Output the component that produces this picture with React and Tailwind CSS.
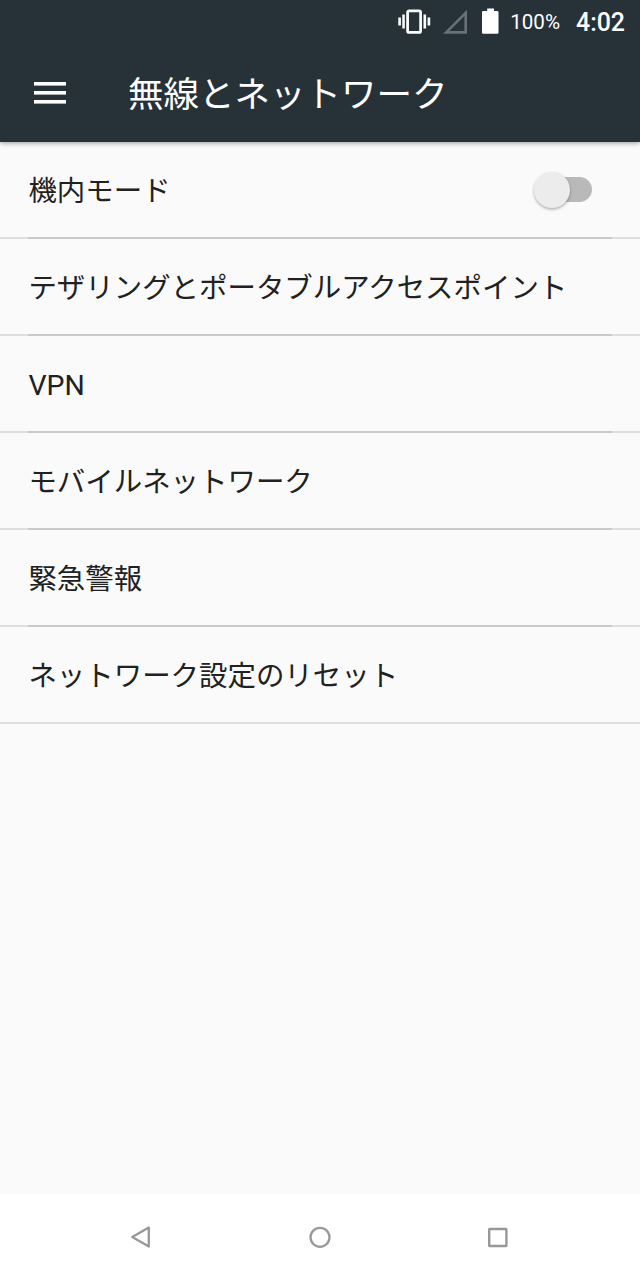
const rows = [
  { label: '機内モード', toggle: true },
  { label: 'テザリングとポータブルアクセスポイント' },
  { label: 'VPN' },
  { label: 'モバイルネットワーク' },
  { label: '緊急警報' },
  { label: 'ネットワーク設定のリセット' },
];

function StatusBar() {
  return (
    <div className="flex h-11 items-center justify-end pr-[15px] text-white">
      <svg className="mr-3 h-7 w-[33px]" viewBox="0 0 33 28" fill="#fff">
        <rect x="9.6" y="2.8" width="13" height="21.6" rx="1.5" fill="none" stroke="#fff" strokeWidth="2.7" />
        <rect x="0.3" y="9.5" width="2.6" height="8" />
        <rect x="4.3" y="6.5" width="2.5" height="14" />
        <rect x="25.5" y="6.5" width="2.6" height="14" />
        <rect x="29.6" y="9.5" width="2.6" height="8" />
      </svg>
      <svg className="mr-3.5 h-7 w-[25px]" viewBox="0 0 25 28">
        <path d="M3.2 24.4H22.7V4.8Z" fill="none" stroke="#697176" strokeWidth="2.6" />
      </svg>
      <svg className="mr-[10px] h-7 w-[18px]" viewBox="0 0 18 28">
        <path d="M5.2 0.4h6.8v2.5h3.2q1.3 0 1.3 1.3v20.3q0 1.3-1.3 1.3H1.3Q0 25.8 0 24.5V4.2q0-1.3 1.3-1.3h3.9z" fill="#fff" />
      </svg>
      <span className="mr-[16px] text-[20.6px] leading-none">100%</span>
      <span className="pt-0.5 text-[24.9px] font-medium leading-none">4:02</span>
    </div>
  );
}

function Switch() {
  return (
    <div className="flex h-[38px] w-[60px] items-center">
      <div className="relative ml-[19px] h-[25px] w-10 rounded-full bg-[#b9b9b9]">
        <div className="absolute -left-[18px] -top-[5px] size-[36px] rounded-full bg-[#ececec] shadow-[0_1.5px_3px_rgba(0,0,0,0.3)]" />
      </div>
    </div>
  );
}

export default function App() {
  return (
    <div
      lang="ja"
      className="flex h-[1280px] w-[640px] flex-col overflow-hidden bg-[#fafafa] font-[Roboto,'Noto_Sans_CJK_JP',sans-serif]"
    >
      <header className="z-10 h-[142px] shrink-0 bg-[#263238] shadow-[0_1px_5px_rgba(0,0,0,0.4)]">
        <StatusBar />
        <div className="flex h-[98px] items-center pl-[34px]">
          <svg className="h-[22px] w-8" viewBox="0 0 32 22" fill="#fff">
            <rect y="0" width="32" height="3.6" />
            <rect y="9" width="32" height="3.6" />
            <rect y="18" width="32" height="3.6" />
          </svg>
          <h1 className="ml-[62px] pt-1.5 text-[35.5px] leading-none text-white">無線とネットワーク</h1>
        </div>
      </header>
      <main className="flex-1">
        {rows.map((row, i) => (
          <div key={row.label} className="flex h-[97px] flex-col">
            <div className="flex flex-1 items-center justify-between pl-[28.4px] pr-[47px]">
              <span className="whitespace-nowrap pt-1.5 text-[28.44px] leading-none text-[#212121]">{row.label}</span>
              {row.toggle && <Switch />}
            </div>
            <div className="flex h-[2px] bg-[#dedede]">
              {i < rows.length - 1 && <div className="mx-7 flex-1 bg-[#cacaca]" />}
            </div>
          </div>
        ))}
      </main>
      <nav className="flex h-[86px] shrink-0 items-center bg-white pl-[130px] text-[#989898]">
        <svg className="size-6" viewBox="0 0 24 24" fill="none" stroke="currentColor" strokeWidth="2.3" strokeLinejoin="round">
          <path d="M2.3 12 18.8 2.5v19Z" />
        </svg>
        <svg className="ml-[154px] size-6" viewBox="0 0 24 24" fill="none" stroke="currentColor" strokeWidth="2.3">
          <circle cx="12" cy="12.3" r="9.5" />
        </svg>
        <svg className="ml-[154px] size-6" viewBox="0 0 24 24" fill="none" stroke="currentColor" strokeWidth="2.4" strokeLinejoin="round">
          <rect x="3.2" y="4" width="17.2" height="17" rx="0.5" />
        </svg>
      </nav>
    </div>
  );
}
